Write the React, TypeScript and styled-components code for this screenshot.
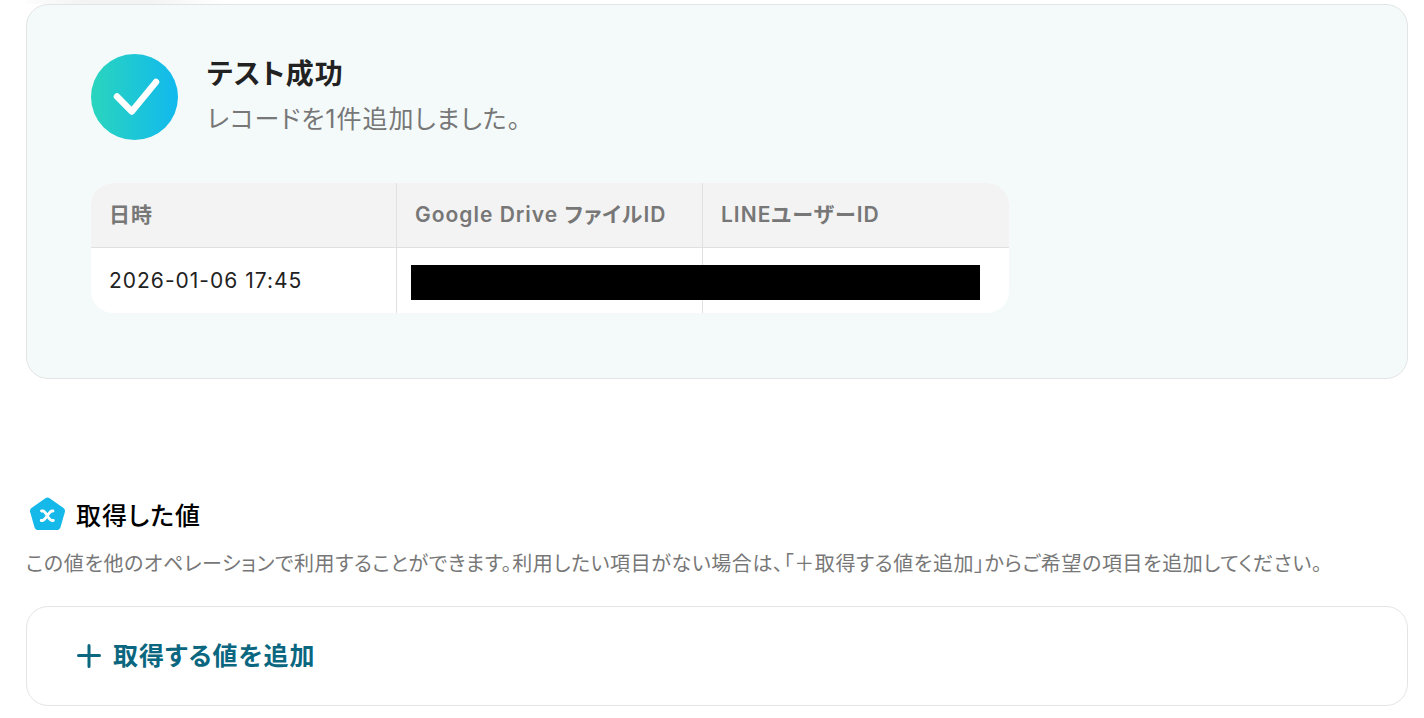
import React from "react";
import styled, { createGlobalStyle } from "styled-components";

const GlobalStyle = createGlobalStyle`
  *, *::before, *::after { box-sizing: border-box; }
  body {
    margin: 0;
    background: #ffffff;
    color: #222222;
    font-family: Inter, "Noto Sans CJK JP", sans-serif;
    font-feature-settings: "palt";
    letter-spacing: 1px;
  }
  h2, h3, p { margin: 0; }
`;

const Page = styled.main`
  padding: 0 16px 12px 26px;
`;

const TopShadow = styled.div`
  width: 200px;
  height: 4px;
  background: linear-gradient(90deg, #fdfdfd, #f3f3f3 30%, #f3f3f3 60%, #ffffff);
`;

const Panel = styled.section`
  border: 1px solid #e3e5e5;
  border-radius: 22px;
`;

const ResultPanel = styled(Panel)`
  padding: 49px 64px 65px;
  background: #f4fafa;
`;

const ResultHeader = styled.header`
  display: flex;
  align-items: flex-start;
  gap: 28px;
  margin-bottom: 42px;
`;

const ResultTitle = styled.h2`
  font-size: 28px;
  font-weight: 600;
  line-height: 40px;
`;

const ResultMessage = styled.p`
  margin-top: 5px;
  color: #777777;
  font-size: 25px;
  line-height: 40px;
`;

const TableFrame = styled.div`
  position: relative;
  width: 918px;
  max-width: 100%;
  overflow: hidden;
  border-radius: 22px;
  background: #ffffff;
`;

const Table = styled.table`
  width: 100%;
  table-layout: fixed;
  border-collapse: separate;
  border-spacing: 0;
  font-size: 21px;
  line-height: 32px;
  text-align: left;

  th, td {
    height: 65px;
    padding: 0 18px;
    border-right: 1px solid #e0e0e0;
  }
  th:last-child, td:last-child {
    border-right: 0;
  }
  th {
    border-bottom: 1px solid #e0e0e0;
    background: #f3f3f3;
    color: #777777;
    font-weight: 600;
  }
`;

const Redaction = styled.div`
  position: absolute;
  right: 29px;
  bottom: 13px;
  width: 62%;
  height: 35px;
  background: #000000;
`;

const ValuesSection = styled.section`
  margin-top: 117px;
`;

const ValuesHeading = styled.h3`
  display: flex;
  align-items: center;
  gap: 8px;
  color: #000000;
  font-size: 25px;
  font-weight: 500;
  line-height: 40px;
`;

const Description = styled.p`
  margin: 12px 0 26px;
  color: #777777;
  font-size: 20px;
  line-height: 32px;
  letter-spacing: 0.03em;
`;

const AddPanel = styled(Panel)`
  padding: 29px 50px;
`;

const AddButton = styled.button`
  display: flex;
  align-items: center;
  gap: 11px;
  padding: 0;
  border: 0;
  background: none;
  color: #0b6780;
  font: inherit;
  font-size: 25px;
  font-weight: 600;
  line-height: 40px;
  letter-spacing: inherit;
  cursor: pointer;
`;

function SuccessIcon() {
  return (
    <svg width="88" height="87" viewBox="0 0 88 87" fill="none" aria-hidden="true">
      <defs>
        <linearGradient id="success" x1="0" y1="0" x2="1" y2="0">
          <stop offset="0" stopColor="#2ad5bd" />
          <stop offset="1" stopColor="#11b9ee" />
        </linearGradient>
      </defs>
      <ellipse cx="43.5" cy="43" rx="43.5" ry="43" fill="url(#success)" />
      <path d="M26 42.5L40.8 57.5L65 28" stroke="#fff" strokeWidth="6.5" strokeLinecap="round" strokeLinejoin="round" />
    </svg>
  );
}

function ValueIcon() {
  return (
    <svg width="42" height="40" viewBox="0 2 42 40" fill="none" aria-hidden="true">
      <path
        d="M19.4 4.2Q21.5 2.6 23.6 4.2L37.5 14.1Q39.6 15.7 38.8 18.2L34.5 33.2Q33.6 36 30.7 36H12.3Q9.4 36 8.5 33.2L4.2 18.2Q3.4 15.7 5.500 14.1Z"
        fill="#14b9ea"
      />
      <path
        d="M15.5 17H17C20 17 22.500 26.500 26 26.500H27.300M27 17H26C23 17 19.500 26.500 16.200 26.500H15.200"
        stroke="#fff"
        strokeWidth="2.800"
        strokeLinecap="round"
      />
    </svg>
  );
}

function PlusIcon() {
  return (
    <svg width="25" height="25" viewBox="0 0 25 25" fill="none" aria-hidden="true">
      <path d="M12 1.5V22.5M1.5 11.5H22.5" stroke="currentColor" strokeWidth="3" strokeLinecap="round" />
    </svg>
  );
}

export default function App() {
  return (
    <Page>
      <GlobalStyle />
      <TopShadow />
      <ResultPanel>
        <ResultHeader>
          <SuccessIcon />
          <div>
            <ResultTitle>テスト成功</ResultTitle>
            <ResultMessage>レコードを1件追加しました。</ResultMessage>
          </div>
        </ResultHeader>
        <TableFrame>
          <Table>
            <thead>
              <tr>
                <th scope="col">日時</th>
                <th scope="col">Google Drive ファイルID</th>
                <th scope="col">LINEユーザーID</th>
              </tr>
            </thead>
            <tbody>
              <tr>
                <td>2026-01-06 17:45</td>
                <td />
                <td />
              </tr>
            </tbody>
          </Table>
          <Redaction />
        </TableFrame>
      </ResultPanel>

      <ValuesSection>
        <ValuesHeading>
          <ValueIcon />
          取得した値
        </ValuesHeading>
        <Description>
          この値を他のオペレーションで利用することができます。利用したい項目がない場合は、「＋取得する値を追加」からご希望の項目を追加してください。
        </Description>
        <AddPanel>
          <AddButton type="button">
            <PlusIcon />
            取得する値を追加
          </AddButton>
        </AddPanel>
      </ValuesSection>
    </Page>
  );
}
